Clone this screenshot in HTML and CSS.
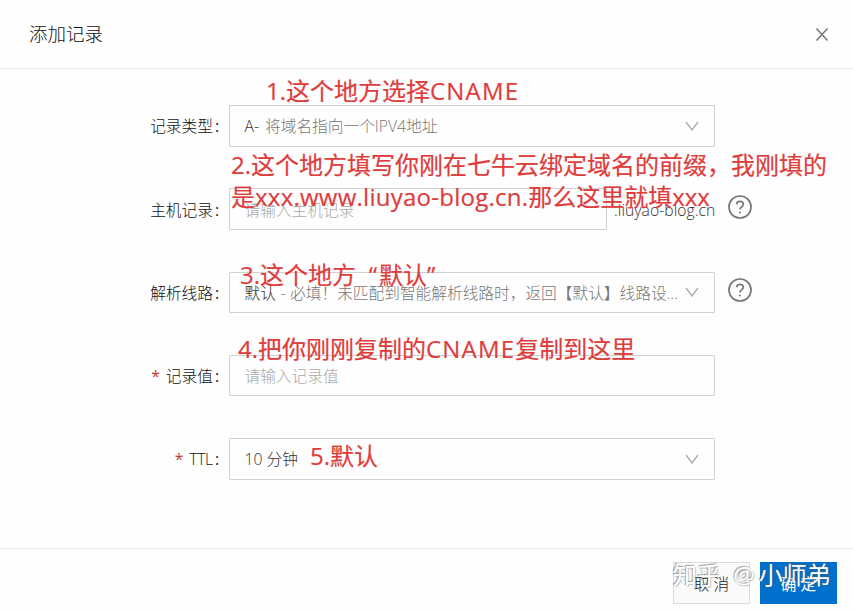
FILE: index.html
```html
<!DOCTYPE html>
<html lang="zh-CN">
<head>
<meta charset="utf-8">
<title>添加记录</title>
<link rel="stylesheet" href="styles.css">
</head>
<body>
<div class="dialog">
  <header class="header">
    <h1 class="title">添加记录</h1>
    <svg class="close" viewBox="0 0 14 14"><path d="M1.5 1 12.5 13M12.5 1 1.5 13"/></svg>
  </header>
  <main class="form">
    <div class="row">
      <label class="label">记录类型<span class="colon">:</span></label>
      <div class="field"><span class="value muted"><span class="dark">A-</span> <span class="desc">将域名指向一个IPV4地址</span></span><svg class="chevron" viewBox="0 0 14 10"><path d="M1 1 7 9 13 1"/></svg></div>
    </div>
    <div class="row">
      <label class="label">主机记录<span class="colon">:</span></label>
      <div class="field short"><span class="value placeholder">请输入主机记录</span></div>
      <span class="suffix">.liuyao-blog.cn</span>
      <svg class="help" viewBox="0 0 24 24"><circle cx="12" cy="12" r="11"/><path d="M8.7 9.3C8.7 5.3 15.3 5.3 15.3 9.2C15.3 11.6 12 11.7 12 14.6"/><circle class="dot" cx="12" cy="17.6" r="1"/></svg>
    </div>
    <div class="row">
      <label class="label">解析线路<span class="colon">:</span></label>
      <div class="field"><span class="value muted"><span class="dark">默认</span> <span class="dash">-</span> 必填！未匹配到智能解析线路时，返回【默认】线路设...</span><svg class="chevron" viewBox="0 0 14 10"><path d="M1 1 7 9 13 1"/></svg></div>
      <svg class="help" viewBox="0 0 24 24"><circle cx="12" cy="12" r="11"/><path d="M8.7 9.3C8.7 5.3 15.3 5.3 15.3 9.2C15.3 11.6 12 11.7 12 14.6"/><circle class="dot" cx="12" cy="17.6" r="1"/></svg>
    </div>
    <div class="row">
      <label class="label"><span class="star">*</span>记录值<span class="colon">:</span></label>
      <div class="field"><span class="value placeholder">请输入记录值</span></div>
    </div>
    <div class="row">
      <label class="label"><span class="star">*</span><span class="ttl">TTL</span><span class="colon">:</span></label>
      <div class="field"><span class="value dark">10 分钟</span><svg class="chevron" viewBox="0 0 14 10"><path d="M1 1 7 9 13 1"/></svg></div>
    </div>
  </main>
  <footer class="footer">
    <div class="button">取 消</div>
    <div class="button primary">确 定</div>
  </footer>
  <div class="note note-1">1.这个地方选择<span class="caps">CNAME</span></div>
  <div class="note note-2">2.这个地方填写你刚在七牛云绑定域名的前缀，我刚填的<br>是<span class="domain">xxx.www.liuyao-blog.cn.</span>那么这里就填xxx</div>
  <div class="note note-3">3.这个地方<span class="open">“</span>默认”</div>
  <div class="note note-4">4.把你刚刚复制的<span class="caps">CNAME</span>复制到这里</div>
  <div class="note note-5">5.默认</div>
  <div class="watermark">知乎 <span class="at">@</span>小师弟</div>
</div>
</body>
</html>
```

FILE: styles.css
```css
* { box-sizing: border-box; }
body {
  margin: 0;
  background: #fefefe;
  font-family: "Open Sans", "Noto Sans CJK SC", sans-serif;
  font-weight: 300;
  font-size: 15.7px;
  color: #111;
}
.dialog {
  position: relative;
  display: flex;
  flex-direction: column;
  height: 611px;
  overflow: hidden;
}
.header {
  display: flex;
  align-items: center;
  justify-content: space-between;
  height: 69px;
  padding: 0 24px 0 29px;
  border-bottom: 1px solid #e6e6e8;
}
.title { margin: 0; padding-bottom: 2px; font-size: 18.5px; font-weight: 300; color: #111; }
.close { width: 14px; height: 15px; fill: none; stroke: #777; stroke-width: 1.5; }
.form {
  display: flex;
  flex-direction: column;
  gap: 41.75px;
  height: 479px;
  padding-top: 36px;
}
.row { display: flex; align-items: center; height: 41.5px; white-space: nowrap; }
.label { width: 220px; margin-right: 9px; text-align: right; }
.colon { margin-left: 2px; margin-right: 1px; font-weight: 400; }
.star { margin-right: 6px; color: #c33d32; font-weight: 400; }
.ttl { letter-spacing: -0.3px; }
.field {
  display: flex;
  align-items: center;
  justify-content: space-between;
  width: 486px;
  height: 100%;
  padding: 0 15px 0 14.5px;
  border: 1px solid #d0d1d3;
  border-radius: 1px;
}
.short { width: 378px; }
.muted { color: #777; }
.placeholder { color: #aaa; }
.dark { color: #333; }
.desc { margin-left: 2px; }
.dash { margin: 0 0.5px; }
.chevron { flex: none; width: 14px; height: 10px; fill: none; stroke: #aaa; stroke-width: 1.3; }
.suffix { width: 108px; padding: 2px 0 0 7px; color: #333; letter-spacing: 0.05px; }
.help { width: 24px; height: 24px; margin: -5px 0 0 13px; fill: none; stroke: #777; stroke-width: 1.7; }
.dot { fill: #777; stroke: none; }
.footer {
  display: flex;
  justify-content: flex-end;
  gap: 10px;
  height: 63px;
  padding: 13px 16px 0 0;
  border-top: 1px solid #e6e6e8;
}
.button {
  display: flex;
  align-items: center;
  justify-content: center;
  width: 77px;
  height: 42px;
  border: 1px solid #dcdcdc;
  background: #fafafa;
  color: #222;
}
.primary { border-color: #0070cc; background: #0070cc; color: #fff; font-weight: 400; }
.note {
  position: absolute;
  color: #df3c3c;
  font-size: 24px;
  font-weight: 400;
  line-height: 32px;
  white-space: nowrap;
  -webkit-text-stroke: 0.2px #df3c3c;
}
.note-1 { left: 266px; top: 75px; }
.note-2 { left: 231px; top: 149px; }
.note-3 { left: 240px; top: 259px; }
.note-4 { left: 238px; top: 333px; }
.note-5 { left: 310px; top: 440px; }
.caps { letter-spacing: 1.2px; }
.domain { letter-spacing: 0.25px; }
.open { display: inline-block; width: 23px; padding-right: 2px; text-align: right; }
.watermark {
  position: absolute;
  left: 673px;
  top: 558px;
  color: #fff;
  font-size: 24px;
  font-weight: 400;
  line-height: 34px;
  white-space: nowrap;
  text-shadow: -1px -1px 1px rgba(90, 90, 90, 0.55), 1px 1px 1px rgba(90, 90, 90, 0.35);
}
.at { margin: 0 4px 0 6px; }
```
